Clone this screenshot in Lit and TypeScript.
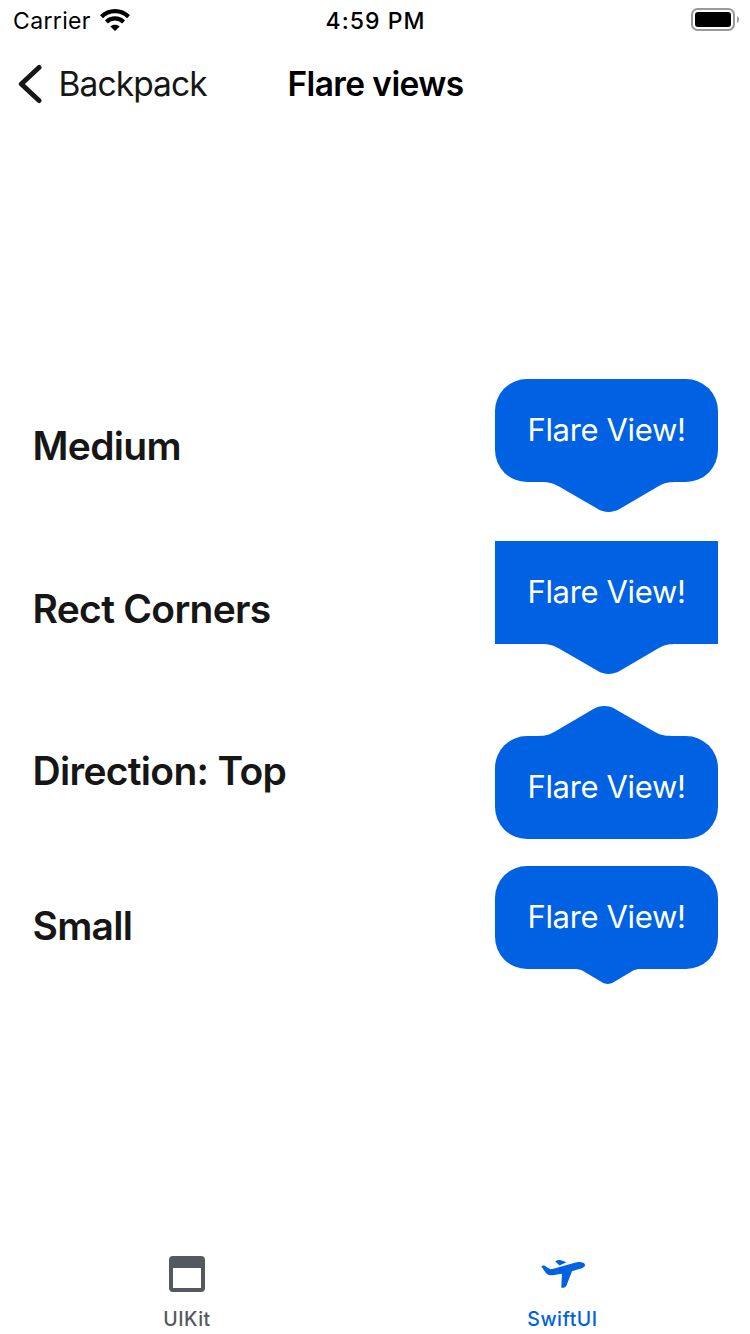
import { LitElement, html, css, svg } from "lit";
import { customElement, property } from "lit/decorators.js";

type Variant = "medium" | "rect" | "top" | "small";

const POINTER_MEDIUM =
  "M43 102 V103 C52 103 57 103.500 64 107.500 L102.500 129.800 C109 134 118 134 125 129.800 L163 107.500 C170 103.500 174 103 183 103 V102 Z";
const POINTER_SMALL =
  "M78 102 V103 C83 103 85 103.300 88.500 105.300 L107 116.300 C110.500 118.500 115 118.500 118.500 116.300 L137 105.300 C140.500 103.300 142 103 147 103 V102 Z";

@customElement("flare-view")
export class FlareView extends LitElement {
  @property() variant: Variant = "medium";

  static styles = css`
    :host { display: block; width: 223px; flex: none; }
    .flare { display: grid; width: 223px; color: #fff; }
    .shape, .text { grid-area: 1 / 1; }
    .shape { display: block; fill: #0062e3; }
    .text {
      height: 101px; line-height: 101px; text-align: center; white-space: nowrap;
      font-size: 31px; letter-spacing: -0.35px;
    }
    .top .text { padding-top: 30px; }
  `;

  render() {
    const small = this.variant === "small";
    const top = this.variant === "top";
    const h = small ? 118 : 133;
    const r = this.variant === "rect" ? 0 : 32;
    return html`
      <div class="flare ${this.variant}">
        <svg class="shape" width="223" height=${h} viewBox="0 0 223 ${h}">
          <g transform=${top ? "rotate(180 111.5 66.5)" : "rotate(0)"}>
            ${svg`<rect width="223" height="103" rx=${r}></rect>
            <path d=${small ? POINTER_SMALL : POINTER_MEDIUM}></path>`}
          </g>
        </svg>
        <span class="text">Flare View!</span>
      </div>
    `;
  }
}

@customElement("app-root")
export class AppRoot extends LitElement {
  static styles = css`
    :host {
      display: flex; flex-direction: column; box-sizing: border-box;
      width: 750px; height: 1334px; overflow: hidden; background: #fff; color: #161616;
      font-family: Inter, "Liberation Sans", sans-serif;
    }
    .status {
      display: grid; grid-template-columns: 1fr auto 1fr; align-items: center;
      height: 40px; padding: 0 12px 0 13px; color: #000; font-size: 23px; line-height: 40px;
    }
    .carrier { display: flex; align-items: center; gap: 9px; letter-spacing: 0.35px; }
    .carrier-name, .time { padding-top: 2px; line-height: 38px; }
    .time { font-weight: 500; letter-spacing: 1.05px; }
    .battery { justify-self: end; display: block; margin-right: -1px; }
    .nav {
      display: grid; grid-template-columns: 1fr auto 1fr; align-items: center;
      height: 88px; padding: 0 17px 0 18px; font-size: 33.5px; line-height: 88px;
    }
    .back { display: flex; align-items: center; gap: 17px; letter-spacing: -0.9px; }
    .back svg { margin-left: -0.5px; }
    .title { font-weight: 600; color: #000; letter-spacing: -0.6px; }
    .list { flex: 1; padding: 251px 32px 0; }
    .row { display: flex; align-items: center; justify-content: space-between; }
    .gap-a { margin-top: 29px; }
    .gap-b { margin-top: 32px; }
    .gap-c { margin-top: 27px; }
    .label { padding-left: 0.5px; font-size: 39px; font-weight: 600; line-height: 48px; letter-spacing: -0.7px; }
    .label.rect, .label.small { padding-top: 2px; }
    .label.top { padding-bottom: 3px; }
    .tabs { display: grid; grid-template-columns: 374px 1fr; height: 98px; }
    .tab {
      display: flex; flex-direction: column; align-items: center;
      color: #545860; font-size: 19.5px; font-weight: 500; line-height: 24px; letter-spacing: 0.5px;
    }
    .tab svg { display: block; margin: 14px 0 9px; }
    .active { color: #0062e3; padding-left: 1px; }
  `;

  private row(label: string, variant: Variant, gap = "") {
    return html`<div class="row ${gap}">
      <span class="label ${variant}">${label}</span>
      <flare-view variant=${variant}></flare-view>
    </div>`;
  }

  render() {
    return html`
      <header class="status">
        <div class="carrier">
          <span class="carrier-name">Carrier</span>
          <svg width="30" height="22" viewBox="0 0 30 22">
            <g fill="none" stroke="#000" stroke-width="4.200">
              <path d="M1.500 7.700 C9 0.300 21 0.300 28.500 7.700"></path>
              <path d="M6.400 12.900 C11.200 8.300 18.800 8.300 23.600 12.900"></path>
            </g>
            <path d="M10.300 17.500 C13 15.200 17 15.200 19.700 17.500 L15 22 Z"></path>
          </svg>
        </div>
        <span class="time">4:59 PM</span>
        <svg class="battery" width="48" height="24" viewBox="0 0 48 24">
          <rect x="1" y="1" width="42" height="21" rx="5.500" fill="none" stroke="#999" stroke-width="2"></rect>
          <rect x="4" y="4" width="36" height="15" rx="3"></rect>
          <path d="M46 8 Q48 9 48 11.500 Q48 14 46 15 Z" fill="#999"></path>
        </svg>
      </header>
      <nav class="nav">
        <div class="back">
          <svg width="24" height="40" viewBox="0 0 24 40">
            <path d="M21 3.500 L3.300 20 L21 36.500" fill="none" stroke="#161616" stroke-width="5" stroke-linecap="round" stroke-linejoin="round"></path>
          </svg>
          <span class="back-text">Backpack</span>
        </div>
        <span class="title">Flare views</span>
      </nav>
      <main class="list">
        ${this.row("Medium", "medium")}
        ${this.row("Rect Corners", "rect", "gap-a")}
        ${this.row("Direction: Top", "top", "gap-b")}
        ${this.row("Small", "small", "gap-c")}
      </main>
      <footer class="tabs">
        <div class="tab">
          <svg width="48" height="48" viewBox="0 0 48 48" fill="currentColor">
            <path fill-rule="evenodd" d="M10 6 H38 Q42 6 42 10 V38 Q42 42 38 42 H10 Q6 42 6 38 V10 Q6 6 10 6 Z M10 18 V38 H38 V18 Z"></path>
          </svg>
          <span class="tab-text">UIKit</span>
        </div>
        <div class="tab active">
          <svg width="48" height="48" viewBox="0 0 48 48" fill="currentColor">
            <path d="M2.300 16.200 C4 15.200 6 15.500 7.500 17 L11.500 19.300 C18 18.200 30 14 38 12.300 C42 11.700 45.500 12.500 46 14.800 C46.300 17.500 42 18.700 38.500 19.600 L33 21.200 L27.500 35.500 C26.800 37.300 25 38 22.300 37.800 L22.900 23.700 L13.500 25.200 C10 25.800 8 24.500 6.500 22.600 Z"></path>
            <path d="M16.300 11.500 Q18.500 9.500 22 10.200 L27.500 12.200 L20.500 15.500 Z"></path>
          </svg>
          <span class="tab-text">SwiftUI</span>
        </div>
      </footer>
    `;
  }
}
